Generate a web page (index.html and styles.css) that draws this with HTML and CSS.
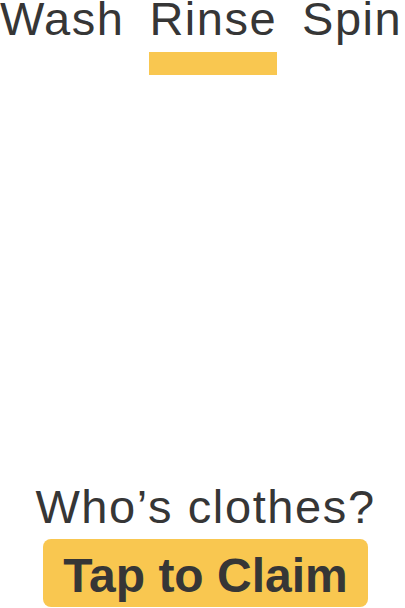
FILE: index.html
```html
<!DOCTYPE html>
<html lang="en">
<head>
<meta charset="utf-8">
<title>Laundry</title>
<link rel="stylesheet" href="styles.css">
</head>
<body>
<div class="screen">
  <nav class="tabs">
    <div class="tab"><span class="tab-label">Wash</span></div>
    <div class="tab tab-active"><span class="tab-label">Rinse</span><span class="tab-bar"></span></div>
    <div class="tab"><span class="tab-label">Spin</span></div>
  </nav>
  <div class="claim">
    <p class="claim-question">Who’s clothes?</p>
    <button class="claim-button">Tap to Claim</button>
  </div>
</div>
</body>
</html>
```
FILE: styles.css
```css
html, body {
  margin: 0;
  padding: 0;
  background: #ffffff;
}
body {
  font-family: "Liberation Sans", Arial, Helvetica, sans-serif;
  color: #363636;
}
.screen {
  height: 608px;
  display: flex;
  flex-direction: column;
  overflow: hidden;
}
.tabs {
  display: flex;
  gap: 25px;
  white-space: nowrap;
}
.tab {
  display: flex;
  flex-direction: column;
  flex: none;
}
.tab-label {
  font-size: 47px;
  line-height: 38px;
  letter-spacing: 1.5px;
}
.tab-bar {
  display: block;
  height: 23px;
  margin-top: 14px;
  background: #f9c750;
}
.claim {
  margin-top: auto;
  display: flex;
  flex-direction: column;
  align-items: center;
  padding-left: 6px;
  padding-bottom: 1px;
}
.claim-question {
  margin: 0 0 8px;
  font-size: 47px;
  line-height: 48px;
  letter-spacing: 1.6px;
  white-space: nowrap;
}
.claim-button {
  width: 325px;
  height: 68px;
  padding: 6px 0 0;
  border: none;
  border-radius: 8px;
  background: #f9c750;
  color: #363636;
  font-family: "Liberation Sans", Arial, Helvetica, sans-serif;
  font-weight: bold;
  font-size: 48px;
  line-height: 62px;
  box-sizing: border-box;
}
```
